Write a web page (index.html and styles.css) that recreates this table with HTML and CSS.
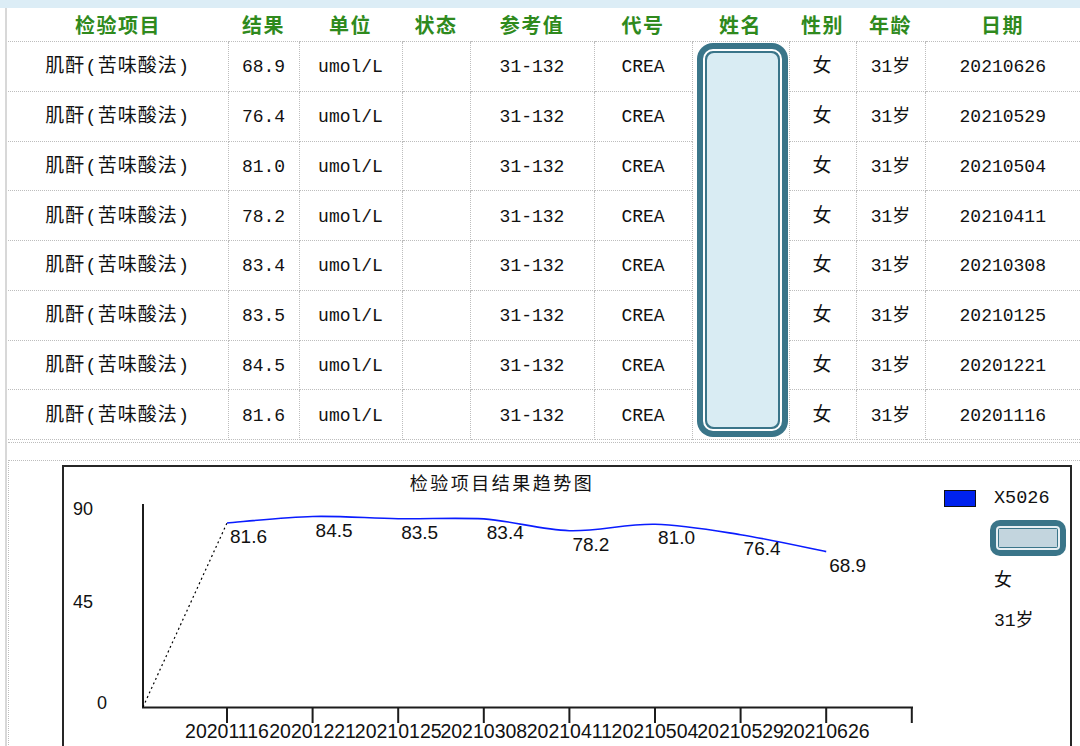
FILE: index.html
```html
<!DOCTYPE html>
<html lang="zh-CN">
<head>
<meta charset="utf-8">
<title>检验项目结果</title>
<link rel="stylesheet" href="styles.css">
</head>
<body>
<div class="strip"></div>
<div class="main">
  <div class="table-wrap">
    <table class="grid">
      <colgroup>
        <col class="c1"><col class="c2"><col class="c3"><col class="c4"><col class="c5">
        <col class="c6"><col class="c7"><col class="c8"><col class="c9"><col class="c10">
      </colgroup>
      <thead>
        <tr><th>检验项目</th><th>结果</th><th>单位</th><th>状态</th><th>参考值</th><th>代号</th><th>姓名</th><th>性别</th><th>年龄</th><th>日期</th></tr>
      </thead>
      <tbody>
        <tr><td class="cn">肌酐(苦味酸法)</td><td>68.9</td><td>umol/L</td><td></td><td>31-132</td><td>CREA</td>
          <td class="name" rowspan="8"><div class="redact"><div class="redact-in"><div class="redact-fill"></div></div></div></td>
          <td class="cn">女</td><td>31岁</td><td>20210626</td></tr>
        <tr><td class="cn">肌酐(苦味酸法)</td><td>76.4</td><td>umol/L</td><td></td><td>31-132</td><td>CREA</td><td class="cn">女</td><td>31岁</td><td>20210529</td></tr>
        <tr><td class="cn">肌酐(苦味酸法)</td><td>81.0</td><td>umol/L</td><td></td><td>31-132</td><td>CREA</td><td class="cn">女</td><td>31岁</td><td>20210504</td></tr>
        <tr><td class="cn">肌酐(苦味酸法)</td><td>78.2</td><td>umol/L</td><td></td><td>31-132</td><td>CREA</td><td class="cn">女</td><td>31岁</td><td>20210411</td></tr>
        <tr><td class="cn">肌酐(苦味酸法)</td><td>83.4</td><td>umol/L</td><td></td><td>31-132</td><td>CREA</td><td class="cn">女</td><td>31岁</td><td>20210308</td></tr>
        <tr><td class="cn">肌酐(苦味酸法)</td><td>83.5</td><td>umol/L</td><td></td><td>31-132</td><td>CREA</td><td class="cn">女</td><td>31岁</td><td>20210125</td></tr>
        <tr><td class="cn">肌酐(苦味酸法)</td><td>84.5</td><td>umol/L</td><td></td><td>31-132</td><td>CREA</td><td class="cn">女</td><td>31岁</td><td>20201221</td></tr>
        <tr><td class="cn">肌酐(苦味酸法)</td><td>81.6</td><td>umol/L</td><td></td><td>31-132</td><td>CREA</td><td class="cn">女</td><td>31岁</td><td>20201116</td></tr>
      </tbody>
    </table>
  </div>

  <div class="chart-panel">
    <div class="chart-box">
      <svg class="plot" width="866" height="300" viewBox="0 0 866 300" xmlns="http://www.w3.org/2000/svg">
        <text class="title" x="438" y="23" text-anchor="middle">检验项目结果趋势图</text>
        <g class="ylab">
          <text x="9" y="48">90</text>
          <text x="9" y="141">45</text>
          <text x="33" y="242">0</text>
        </g>
        <g stroke="#1c1c1c" stroke-width="2" fill="none">
          <path d="M79 37 V241"/>
          <path d="M78 240.5 H849"/>
          <path d="M163 240 V256 M248.6 240 V256 M334.2 240 V256 M419.8 240 V256 M505.4 240 V256 M591 240 V256 M676.6 240 V256 M762.2 240 V256 M847.8 240 V256"/>
        </g>
        <path d="M79 240 L163 56" stroke="#000" stroke-width="1.2" stroke-dasharray="2 3" fill="none"/>
        <path d="M163 56 C177.3 54.9 220.1 50.2 248.6 49.5 C277.1 48.8 305.7 51.3 334.2 51.7 C362.7 52.1 391.3 50.6 419.8 51.9 C448.3 53.9 476.9 62.8 505.4 63.7 C533.9 64.6 562.5 56.6 591 57.3 C619.5 58 648.1 63.2 676.6 67.7 C705.1 72.2 747.9 81.8 762.2 84.6" stroke="#0a1cff" stroke-width="1.6" fill="none"/>
        <g class="vlab">
          <text x="166" y="76">81.6</text>
          <text x="251.6" y="69.5">84.5</text>
          <text x="337.2" y="71.7">83.5</text>
          <text x="422.8" y="71.9">83.4</text>
          <text x="508.4" y="83.7">78.2</text>
          <text x="594" y="77.3">81.0</text>
          <text x="679.6" y="87.7">76.4</text>
          <text x="765.2" y="104.6">68.9</text>
        </g>
        <g class="xlab" text-anchor="middle">
          <text x="163" y="271">20201116</text>
          <text x="248.6" y="271">20201221</text>
          <text x="334.2" y="271">20210125</text>
          <text x="419.8" y="271">20210308</text>
          <text x="505.4" y="271">20210411</text>
          <text x="591" y="271">20210504</text>
          <text x="676.6" y="271">20210529</text>
          <text x="762.2" y="271">20210626</text>
        </g>
      </svg>
      <div class="legend">
        <div class="legend-row"><span class="swatch"></span><span class="legend-code">X5026</span></div>
        <div class="mini-redact"><div class="mini-in"><div class="mini-fill"></div></div></div>
        <div class="legend-text">女</div>
        <div class="legend-text age">31岁</div>
      </div>
    </div>
  </div>
</div>
</body>
</html>
```

FILE: styles.css
```css
html, body {
  margin: 0;
  padding: 0;
  background: #fff;
}
body {
  width: 1080px;
  height: 746px;
  overflow: hidden;
  font-family: "Liberation Mono", "Noto Sans CJK SC", monospace;
  color: #111;
}
.strip {
  height: 8px;
  background: #dcedf6;
}
.main {
  margin-left: 5px;
  border-left: 2px solid #d8d8d8;
  padding-left: 1px;
  height: 800px;
}
.table-wrap {
  border-bottom: 1px dotted #bdbdbd;
  padding-bottom: 2px;
}
.grid {
  table-layout: fixed;
  border-collapse: collapse;
  width: 1072px;
}
.c1 { width: 220px; }
.c2 { width: 71px; }
.c3 { width: 103px; }
.c4 { width: 68px; }
.c5 { width: 124px; }
.c6 { width: 98px; }
.c7 { width: 97px; }
.c8 { width: 67px; }
.c9 { width: 69px; }
.c10 { width: 155px; }
.grid th {
  height: 33px;
  padding: 0;
  font-family: "Noto Sans CJK SC", sans-serif;
  font-weight: 700;
  font-size: 20px;
  letter-spacing: 1.5px;
  color: #2f8a1d;
  text-align: center;
  border-bottom: 1px dotted #bdbdbd;
  line-height: 33px;
}
.grid td {
  height: 46.6px;
  padding: 2px 0 0;
  text-align: center;
  font-size: 18px;
  border: 1px dotted #bdbdbd;
  border-top: none;
  line-height: 20px;
}
.grid td:first-child {
  border-left: none;
}
.grid td:last-child {
  border-right: none;
}
.grid td.cn {
  font-size: 19px;
  letter-spacing: 1px;
}
.grid td.name {
  padding: 1px 1px 2px 4px;
  vertical-align: top;
}
.redact {
  height: 394px;
  background: #3a7589;
  border-radius: 16px;
  padding: 6px;
  box-sizing: border-box;
}
.redact-in {
  height: 100%;
  box-sizing: border-box;
  border: 2px solid #fff;
  border-radius: 10px;
  background: #3a7589;
  padding: 2px;
}
.redact-fill {
  height: 100%;
  background: #d9ecf3;
  border-radius: 7px;
}
.chart-panel {
  margin-top: 17px;
  border-top: 1px dotted #bdbdbd;
  border-left: 1px dotted #bdbdbd;
  padding: 4px 0 0 53px;
}
.chart-box {
  width: 1006px;
  height: 320px;
  border: 2px solid #262626;
  display: flex;
}
.plot {
  display: block;
  flex: none;
}
.plot text {
  font-family: "Liberation Sans", Arial, sans-serif;
  fill: #111;
}
.plot .title {
  font-family: "Noto Sans CJK SC", sans-serif;
  font-size: 18px;
  letter-spacing: 2.5px;
}
.ylab text { font-size: 18px; }
.vlab text { font-size: 19px; }
.xlab text { font-size: 19.5px; }
.legend {
  display: flex;
  flex-direction: column;
  padding: 23px 0 0 14px;
}
.legend-row {
  display: flex;
  align-items: center;
  gap: 18px;
  height: 17px;
}
.swatch {
  width: 30px;
  height: 15px;
  background: #0022ee;
  border: 1px solid #111;
}
.legend-code {
  font-family: "Liberation Mono", monospace;
  font-size: 18.5px;
}
.mini-redact {
  margin: 13px 0 0 46px;
  width: 76px;
  height: 36px;
  box-sizing: border-box;
  background: #3a7589;
  border-radius: 10px;
  padding: 6px;
}
.mini-in {
  height: 100%;
  box-sizing: border-box;
  border: 2px solid #e8f0f4;
  border-radius: 4px;
  background: #3a7589;
  padding: 1px;
}
.mini-fill {
  height: 100%;
  background: #c3d5de;
}
.legend-text {
  margin: 15px 0 0 50px;
  font-family: "Liberation Mono", "Noto Sans CJK SC", monospace;
  font-size: 18px;
  line-height: 20px;
}
.legend-text.age {
  margin-top: 20px;
}
```
